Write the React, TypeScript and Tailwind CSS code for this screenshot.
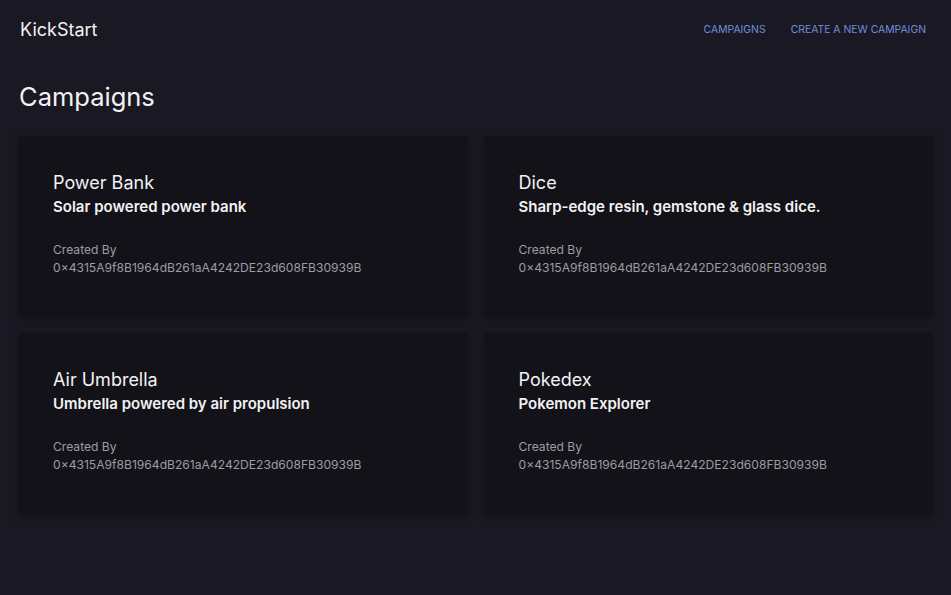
import React from 'react';

type Campaign = {
  title: string;
  description: string;
  creator: string;
};

const campaigns: Campaign[] = [
  { title: 'Power Bank', description: 'Solar powered power bank', creator: '0×4315A9f8B1964dB261aA4242DE23d608FB30939B' },
  { title: 'Dice', description: 'Sharp-edge resin, gemstone & glass dice.', creator: '0×4315A9f8B1964dB261aA4242DE23d608FB30939B' },
  { title: 'Air Umbrella', description: 'Umbrella powered by air propulsion', creator: '0×4315A9f8B1964dB261aA4242DE23d608FB30939B' },
  { title: 'Pokedex', description: 'Pokemon Explorer', creator: '0×4315A9f8B1964dB261aA4242DE23d608FB30939B' },
];

const CampaignCard: React.FC<{ campaign: Campaign }> = ({ campaign }) => (
  <div className="bg-[#131219] rounded-sm shadow-[0_2px_8px_rgba(0,0,0,0.35)] h-[181px] px-[35px] pt-[35px]">
    <h3 className="text-[18px] leading-6 text-[#f2f2f4]">{campaign.title}</h3>
    <p className="text-[15px] leading-6 font-semibold text-[#f2f2f4]">{campaign.description}</p>
    <div className="mt-[22px] text-[12.1px] leading-[18px] text-[#9d9ca4]">
      <div>Created By</div>
      <div>{campaign.creator}</div>
    </div>
  </div>
);

export default function App() {
  return (
    <div className="min-h-screen bg-[#1a1923] font-['Inter',sans-serif] text-white">
      <header className="flex items-center justify-between h-[58px] pl-5 pr-[25px]">
        <a href="#" className="text-[18px] text-[#f2f2f4]">KickStart</a>
        <nav className="flex gap-[25px] mt-[2px] text-[10.4px] uppercase text-[#6f8fdc]">
          <a href="#">Campaigns</a>
          <a href="#">Create a new campaign</a>
        </nav>
      </header>
      <main className="px-[18px]">
        <h1 className="text-[25.5px] leading-8 pl-px mt-[23px] mb-[23px] text-[#f2f2f4]">Campaigns</h1>
        <div className="grid grid-cols-2 gap-4">
          {campaigns.map((c) => (
            <CampaignCard key={c.title} campaign={c} />
          ))}
        </div>
      </main>
    </div>
  );
}
